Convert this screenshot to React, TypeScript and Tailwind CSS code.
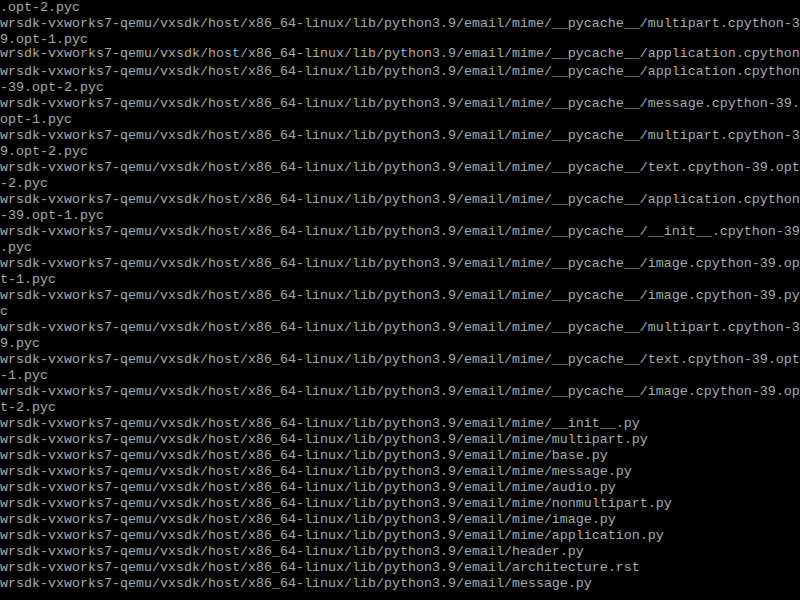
import React from "react";

const P = "wrsdk-vxworks7-qemu/vxsdk/host/x86_64-linux/lib/python3.9/email/";
const C = P + "mime/__pycache__/";

const lines: string[] = [
  ".opt-2.pyc",
  C + "multipart.cpython-3",
  "9.opt-1.pyc",
  "__GLITCH__",
  C + "application.cpython",
  "-39.opt-2.pyc",
  C + "message.cpython-39.",
  "opt-1.pyc",
  C + "multipart.cpython-3",
  "9.opt-2.pyc",
  C + "text.cpython-39.opt",
  "-2.pyc",
  C + "application.cpython",
  "-39.opt-1.pyc",
  C + "__init__.cpython-39",
  ".pyc",
  C + "image.cpython-39.op",
  "t-1.pyc",
  C + "image.cpython-39.py",
  "c",
  C + "multipart.cpython-3",
  "9.pyc",
  C + "text.cpython-39.opt",
  "-1.pyc",
  C + "image.cpython-39.op",
  "t-2.pyc",
  P + "mime/__init__.py",
  P + "mime/multipart.py",
  P + "mime/base.py",
  P + "mime/message.py",
  P + "mime/audio.py",
  P + "mime/nonmultipart.py",
  P + "mime/image.py",
  P + "mime/application.py",
  P + "header.py",
  P + "architecture.rst",
  P + "message.py",
];

export default function App() {
  return (
    <div className="w-[800px] h-[600px] bg-black overflow-hidden font-['Liberation_Mono',monospace] text-[13.333px] leading-4 text-[#aaaaaa]">
      {lines.map((l, i) =>
        l === "__GLITCH__" ? (
          <div key={i} className="h-4 whitespace-pre">
            <div className="h-[13px] overflow-hidden">
              <div className="-mt-[2px]">{C + "application.cpython"}</div>
            </div>
          </div>
        ) : (
          <div key={i} className="h-4 whitespace-pre">
            {l}
          </div>
        )
      )}
    </div>
  );
}
